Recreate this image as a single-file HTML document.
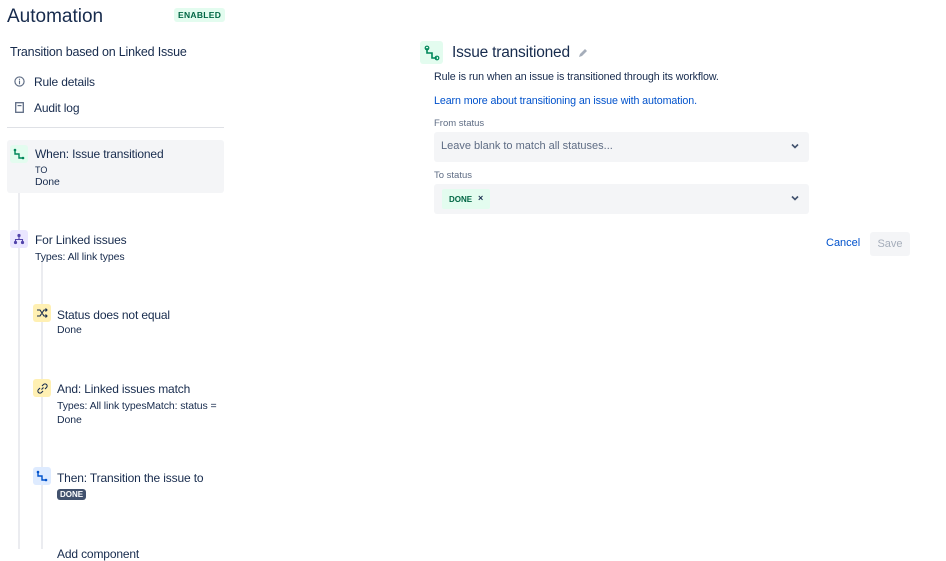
<!DOCTYPE html>
<html><head><meta charset="utf-8"><style>
*{margin:0;padding:0;box-sizing:border-box}
body{width:946px;height:549px;overflow:hidden;background:#fff;font-family:"Liberation Sans",sans-serif;color:#172b4d;position:relative}
.a{position:absolute;white-space:nowrap}
.ib{position:absolute;width:18px;height:18px;border-radius:3px;display:flex;align-items:center;justify-content:center}
.t{font-size:12px;color:#172b4d;letter-spacing:-.15px}
.s{font-size:10.5px;color:#172b4d;letter-spacing:-.1px}
.sel{position:absolute;left:434px;width:375px;height:30px;background:#f4f5f7;border-radius:3px}
.chev{position:absolute;right:10px;top:11px}
</style></head><body>
<div class="a" style="left:7px;top:6px;font-size:19px">Automation</div>
<div class="a" style="left:174px;top:8px;background:#e3fcef;color:#006644;font-size:8.5px;font-weight:bold;padding:2px 4px;border-radius:3px;letter-spacing:.3px">ENABLED</div>
<div class="a" style="left:10px;top:45px;font-size:12.5px;letter-spacing:-.2px">Transition based on Linked Issue</div>
<svg class="a" style="left:14px;top:76px" width="11" height="11" viewBox="0 0 12 12"><circle cx="6" cy="6" r="5" fill="none" stroke="#5e6c84" stroke-width="1.3"/><rect x="5.4" y="5" width="1.2" height="4" fill="#5e6c84"/><rect x="5.4" y="3" width="1.2" height="1.2" fill="#5e6c84"/></svg>
<div class="a t" style="left:34px;top:75px">Rule details</div>
<svg class="a" style="left:15px;top:102px" width="9" height="11" viewBox="0 0 9 11"><rect x=".7" y=".7" width="7.6" height="9.6" fill="none" stroke="#5e6c84" stroke-width="1.3"/><rect x="2.5" y="3" width="4" height="1.2" fill="#5e6c84"/></svg>
<div class="a t" style="left:34px;top:101px">Audit log</div>
<div class="a" style="left:7px;top:127px;width:217px;height:1px;background:#dfe1e6"></div>
<div class="a" style="left:18px;top:160px;width:2px;height:389px;background:#ebecf0"></div>
<div class="a" style="left:41px;top:262px;width:2px;height:287px;background:#ebecf0"></div>
<div class="a" style="left:7px;top:140px;width:217px;height:53px;background:#f4f5f7;border-radius:3px"></div>
<div class="ib" style="left:10px;top:145px;background:#e3fcef"><svg width="12" height="12" viewBox="0 0 12 12"><path d="M2 2V6H6V10H10" fill="none" stroke="#00875a" stroke-width="1.4"/><circle cx="2" cy="2" r="1.3" fill="#00875a"/><circle cx="10" cy="10" r="1.3" fill="#00875a"/></svg></div>
<div class="a t" style="left:35px;top:147px">When: Issue transitioned</div>
<div class="a" style="left:35px;top:165px;font-size:9px">TO</div>
<div class="a s" style="left:35px;top:176px">Done</div>
<div class="ib" style="left:10px;top:230px;background:#eae6ff"><svg width="12" height="12" viewBox="0 0 12 12"><circle cx="6" cy="2.5" r="1.6" fill="#5243aa"/><circle cx="2.5" cy="9.5" r="1.6" fill="#5243aa"/><circle cx="9.5" cy="9.5" r="1.6" fill="#5243aa"/><path d="M6 4V6.5M2.5 8V6.5H9.5V8" fill="none" stroke="#5243aa" stroke-width="1.1"/></svg></div>
<div class="a t" style="left:35px;top:233px">For Linked issues</div>
<div class="a s" style="left:35px;top:251px">Types: All link types</div>
<div class="ib" style="left:33px;top:304px;background:#fff0b3"><svg width="12" height="10" viewBox="0 0 12 10"><path d="M1 2H4L8 8H11M1 8H4L8 2H11M9.5 .5L11 2L9.5 3.5M9.5 6.5L11 8L9.5 9.5" fill="none" stroke="#172b4d" stroke-width="1.1"/></svg></div>
<div class="a t" style="left:57px;top:308px">Status does not equal</div>
<div class="a s" style="left:57px;top:324px">Done</div>
<div class="ib" style="left:33px;top:379px;background:#fff0b3"><svg width="11" height="11" viewBox="0 0 11 11"><path d="M4.5 6.5L6.5 4.5M5 3L6.5 1.5A1.8 1.8 0 0 1 9.5 4.5L8 6M3 5L1.5 6.5A1.8 1.8 0 0 0 4.5 9.5L6 8" fill="none" stroke="#172b4d" stroke-width="1.1"/></svg></div>
<div class="a t" style="left:57px;top:382px">And: Linked issues match</div>
<div class="a s" style="left:57px;top:400px">Types: All link typesMatch: status =</div>
<div class="a s" style="left:57px;top:414px">Done</div>
<div class="ib" style="left:33px;top:467px;background:#deebff"><svg width="12" height="12" viewBox="0 0 12 12"><path d="M2 2V6H6V10H10" fill="none" stroke="#0052cc" stroke-width="1.4"/><circle cx="2" cy="2" r="1.3" fill="#0052cc"/><circle cx="10" cy="10" r="1.3" fill="#0052cc"/></svg></div>
<div class="a t" style="left:57px;top:471px">Then: Transition the issue to</div>
<div class="a" style="left:57px;top:489px;background:#42526e;color:#fff;font-size:8px;font-weight:bold;padding:1px 3px;border-radius:3px">DONE</div>
<div class="a t" style="left:57px;top:547px">Add component</div>

<div class="a" style="left:420px;top:41px;width:23px;height:23px;background:#e3fcef;border-radius:3px;display:flex;align-items:center;justify-content:center"><svg width="16" height="16" viewBox="0 0 16 16"><path d="M3 3V8H8V13H13" fill="none" stroke="#00875a" stroke-width="1.6"/><circle cx="3" cy="3" r="1.8" fill="none" stroke="#00875a" stroke-width="1.2"/><circle cx="13" cy="13" r="1.8" fill="none" stroke="#00875a" stroke-width="1.2"/></svg></div>
<div class="a" style="left:452px;top:44px;font-size:15.5px;letter-spacing:-.2px">Issue transitioned</div>
<svg class="a" style="left:578px;top:48px" width="10" height="10" viewBox="0 0 10 10"><path d="M1 9L2 6L7 1L9 3L4 8Z" fill="#a5adba"/></svg>
<div class="a" style="left:434px;top:71px;font-size:10.7px;letter-spacing:-.1px">Rule is run when an issue is transitioned through its workflow.</div>
<div class="a" style="left:434px;top:95px;font-size:10.7px;letter-spacing:-.1px;color:#0052cc">Learn more about transitioning an issue with automation.</div>
<div class="a" style="left:434px;top:118px;font-size:9.5px;color:#5e6c84">From status</div>
<div class="sel" style="top:132px"><div class="a" style="left:7px;top:8px;font-size:11px;color:#5e6c84">Leave blank to match all statuses...</div><svg class="chev" width="8" height="6" viewBox="0 0 8 6"><path d="M1 1.5L4 4.5L7 1.5" fill="none" stroke="#42526e" stroke-width="1.6"/></svg></div>
<div class="a" style="left:434px;top:170px;font-size:9.5px;color:#5e6c84">To status</div>
<div class="sel" style="top:184px"><div class="a" style="left:8px;top:5px;width:48px;height:20px;background:#e3fcef;border-radius:2px"></div><div class="a" style="left:15px;top:11px;font-size:8px;font-weight:bold;color:#006644">DONE</div><div class="a" style="left:44px;top:9px;font-size:9px;font-weight:bold">×</div><svg class="chev" width="8" height="6" viewBox="0 0 8 6"><path d="M1 1.5L4 4.5L7 1.5" fill="none" stroke="#42526e" stroke-width="1.6"/></svg></div>
<div class="a" style="left:826px;top:237px;font-size:11px;color:#0052cc">Cancel</div>
<div class="a" style="left:870px;top:232px;width:40px;height:24px;background:#f4f5f7;border-radius:3px;color:#a5adba;font-size:11px;text-align:center;line-height:24px">Save</div>
</body></html>
